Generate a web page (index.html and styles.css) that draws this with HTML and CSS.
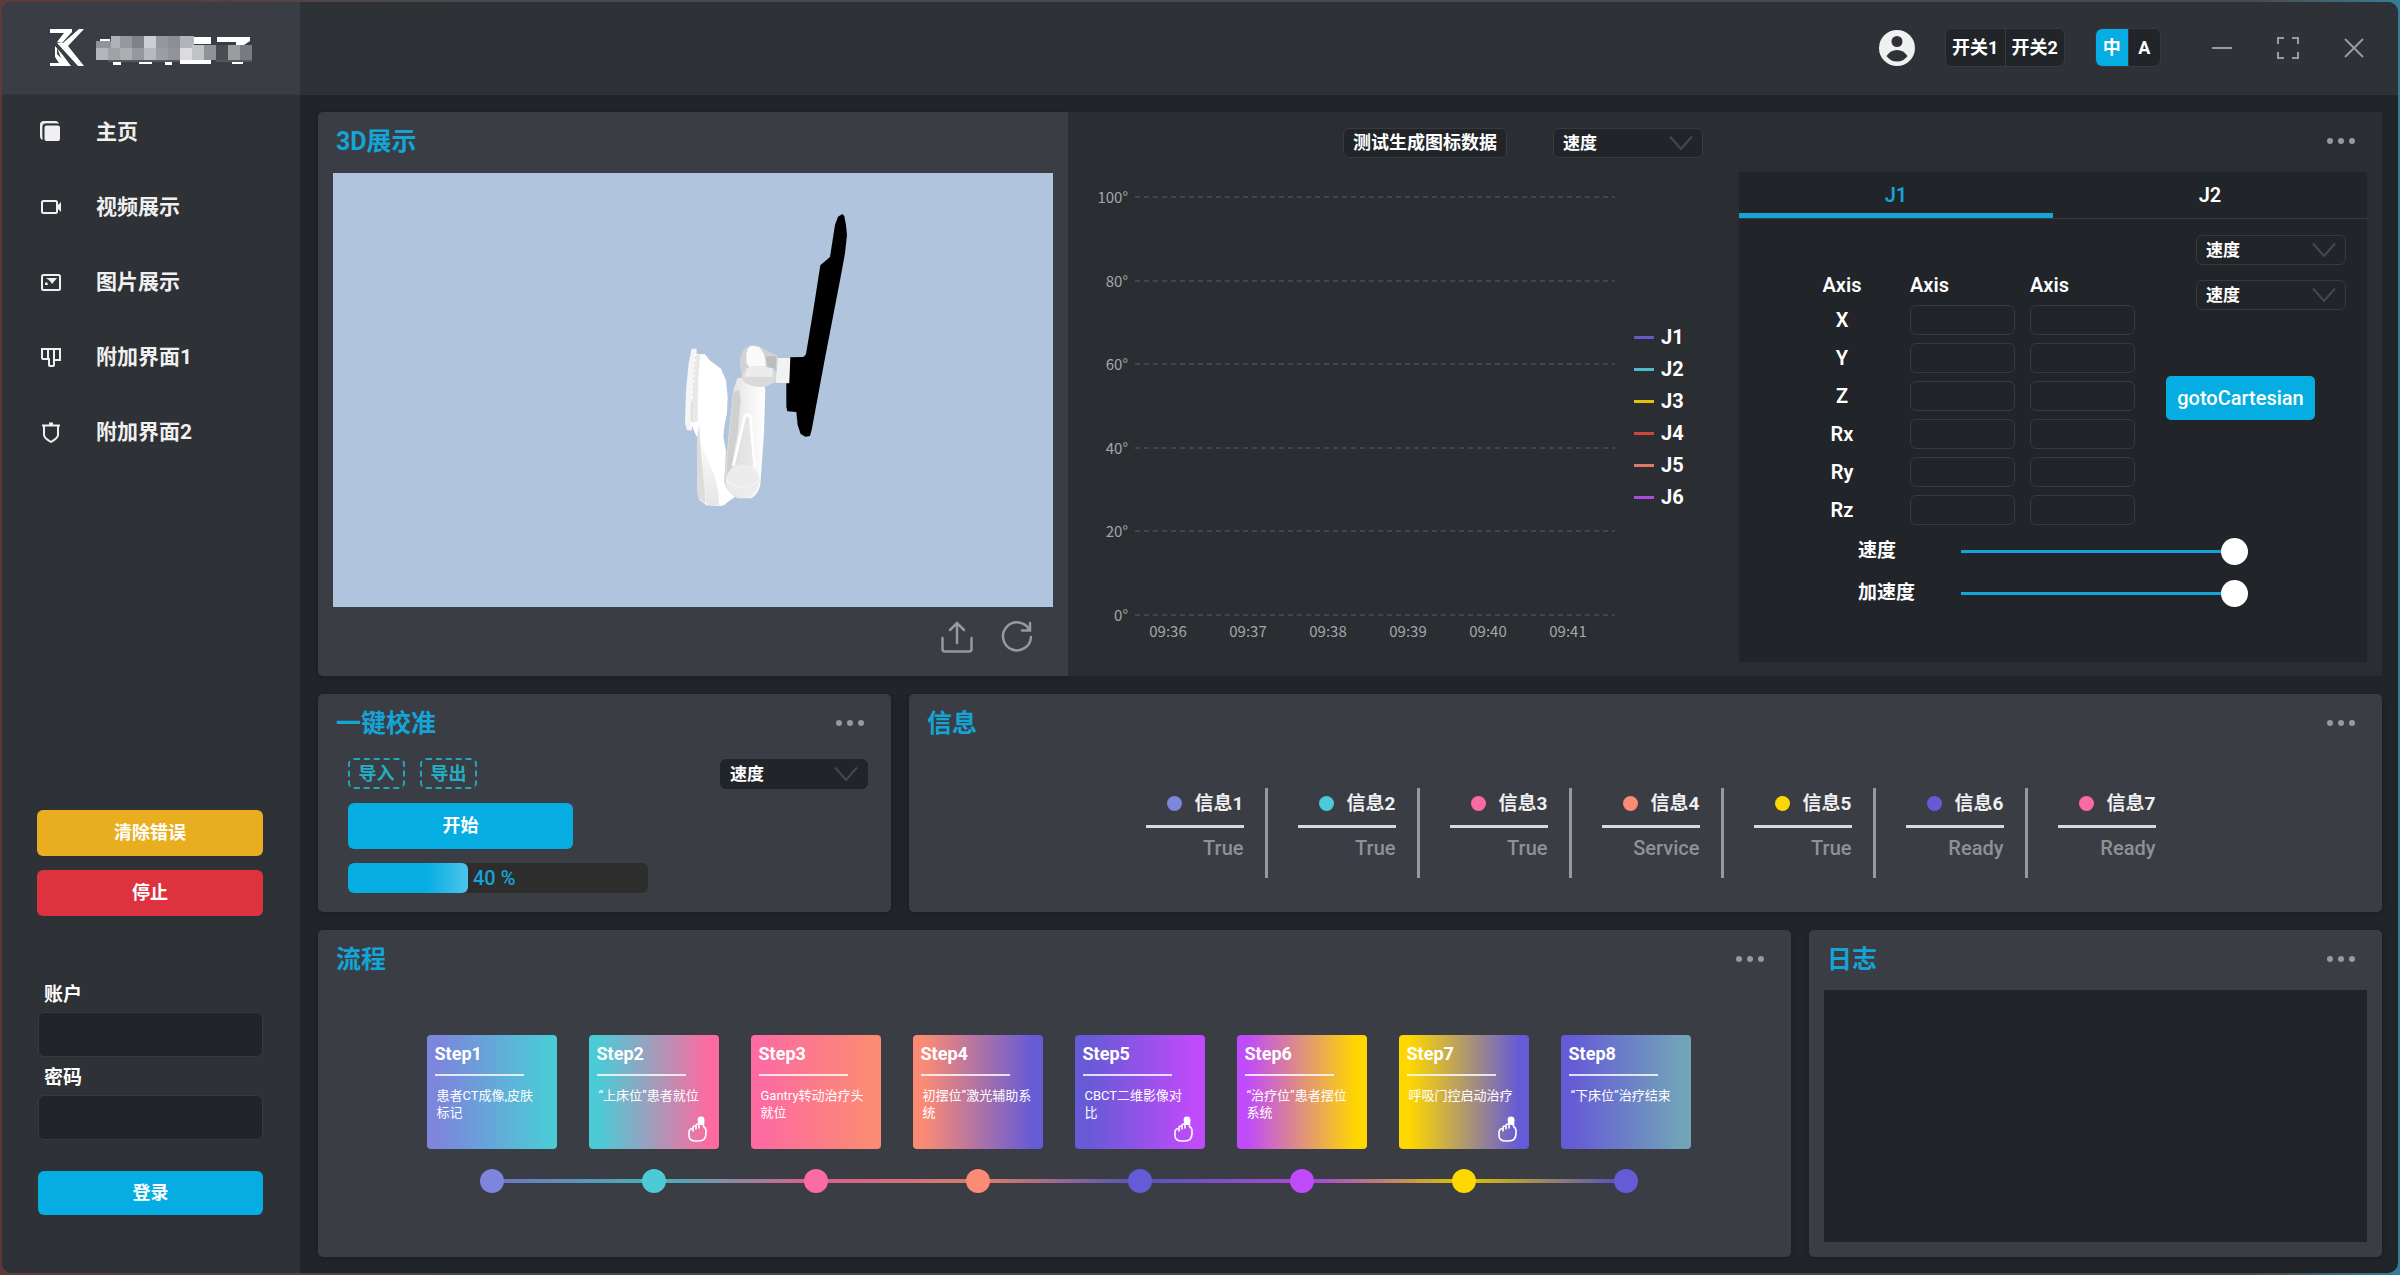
FILE: index.html
```html
<!DOCTYPE html>
<html lang="zh-CN">
<head>
<meta charset="utf-8">
<title>控制台</title>
<link rel="stylesheet" href="styles.css">
</head>
<body>
<svg class="defs" aria-hidden="true">
  <symbol id="chevron" viewBox="0 0 24 16"><path d="M1 1.500 12 14 23 1.500" fill="none" stroke="currentColor" stroke-width="2"/></symbol>
  <symbol id="hand" viewBox="0 0 20 26"><path d="M5 15V12.500q-4 0-4 4v3q0 5.500 7 5.500h2.500q7.500 0 7.500-7.500V14q-.5-2.500-2.500-3.500V4M5 15v-3.500q0-1.500 1.500-1.500T8 11.500V13M8 12V9.500Q8 8 9.500 8t1.500 1.500V12M11 11V4" fill="none" stroke="currentColor" stroke-width="1.600" stroke-linecap="round"/><circle cx="13" cy="4" r="3.400" fill="currentColor"/><path d="M11 4h4v5h-3z" fill="currentColor"/></symbol>
</svg>
<div class="app">
  <aside class="sidebar">
    <div class="brand">
      <svg width="206" height="40" viewBox="0 0 206 40" role="img" aria-label="logo">
        <g transform="translate(-46 -27)">
          <path fill="#fff" d="M50 29h22v3L62 43l-5-1 7-9H50zM79 29h5L68 46l16 20h-6L57 43h6zM50 66v-3h9l-4-6v-11l7 8 9 12zM57 48v6l4 4z"/>
          <path fill="#fff" d="M100 39h10v3h-10zM194 37h17v7h-17zM217 37h33v4l-6 4h-8v-3h-19zM113 61h8v4h-8zM139 61h13v3h-13zM165 61h7v4h-7zM180 60h31v4h-31zM232 61h11v3h-11z"/>
          <path fill="#929498" d="M96 41h15v7H96z"/><path fill="#b4b5ba" d="M96 48h12v12H96z"/><path fill="#a1a2a6" d="M108 48h12v12h-12z"/>
          <path fill="#b1b2b7" d="M111 36h9v12h-9z"/><path fill="#95999d" d="M120 36h12v12h-12z"/><path fill="#7f8388" d="M132 36h12v12h-12z"/><path fill="#cdced1" d="M144 36h12v12h-12z"/><path fill="#94979c" d="M156 36h12v12h-12z"/><path fill="#8b8f94" d="M168 36h12v12h-12z"/><path fill="#b2b4b8" d="M180 36h14v12h-14z"/>
          <path fill="#adaeb2" d="M120 48h12v12h-12z"/><path fill="#95999e" d="M132 48h12v12h-12z"/><path fill="#b8b9bf" d="M144 48h12v12h-12z"/><path fill="#9d9ea3" d="M156 48h12v12h-12z"/><path fill="#909499" d="M168 48h12v12h-12z"/><path fill="#dcdce0" d="M180 48h12v12h-12z"/><path fill="#c1c2c4" d="M192 45h12v15h-12z"/><path fill="#8f9298" d="M204 45h12v15h-12z"/><path fill="#484d52" d="M216 45h12v15h-12z"/><path fill="#9a9ca0" d="M228 45h12v15h-12z"/><path fill="#777a80" d="M240 45h12v15h-12z"/>
          <path fill="#53565b" d="M108 60h72v2h-72zM216 60h36v2h-36z"/>
        </g>
      </svg>
    </div>
    <nav class="menu">
      <a href="#home"><svg viewBox="0 0 22 22"><rect x="1" y="1" width="17" height="17" rx="3" fill="#bbb"/><rect x="3.500" y="3.500" width="17.500" height="17.500" rx="3" fill="#f0f0f0" stroke="#2e3135"/></svg>主页</a>
      <a href="#video"><svg viewBox="0 0 22 22"><rect x="2" y="5" width="15" height="12" rx="1.500"/><path d="M17 10l4-4v10l-4-4z" fill="currentColor" stroke="none"/></svg>视频展示</a>
      <a href="#image"><svg viewBox="0 0 22 22"><rect x="2" y="4" width="18" height="15" rx="1.500"/><path d="M6 7h11l-5 6-2-3z M5 12l2-1 1 3H5z" fill="currentColor" stroke="none"/></svg>图片展示</a>
      <a href="#extra1"><svg viewBox="0 0 22 22"><path d="M2 3h18v11h-6v5q0 1-1 1h-3q-1 0-1-1v-6H3q-1 0-1-1zM8 3v10M14 3v11"/></svg>附加界面1</a>
      <a href="#extra2"><svg viewBox="0 0 22 22"><path d="M2 4.500h18M4 5v9q0 3 7 7 7-4 7-7V5M9 2.500h4"/></svg>附加界面2</a>
    </nav>
    <div class="side-actions">
      <button class="btn amber">清除错误</button>
      <button class="btn red">停止</button>
    </div>
    <form class="login">
      <label for="account">账户</label>
      <input id="account" type="text">
      <label for="password">密码</label>
      <input id="password" type="password">
      <button class="btn blue" type="button">登录</button>
    </form>
  </aside>

  <div class="main">
    <header class="topbar">
      <svg class="avatar" viewBox="0 0 36 36"><circle cx="18" cy="18" r="18" fill="#f0f0f0"/><circle cx="18" cy="11.500" r="5.500" fill="#2e3135"/><path d="M7.500 26q4-6 10.500-6t10.500 6q-4 5.500-10.500 5.500T7.500 26z" fill="#2e3135"/></svg>
      <div class="segment switches"><button>开关1</button><button>开关2</button></div>
      <div class="segment lang"><button class="on">中</button><button>A</button></div>
      <div class="window-buttons">
        <button aria-label="最小化"><svg viewBox="0 0 24 24"><path d="M2 12h20"/></svg></button>
        <button aria-label="全屏"><svg viewBox="0 0 24 24"><path d="M2 8V2h6M16 2h6v6M22 16v6h-6M8 22H2v-6"/></svg></button>
        <button aria-label="关闭"><svg viewBox="0 0 24 24"><path d="M3 3l18 18M21 3 3 21"/></svg></button>
      </div>
    </header>

    <main class="content">
      <section class="row row-top">
        <div class="panel scene-panel">
          <h2>3D展示</h2>
          <svg class="scene" viewBox="0 0 720 434" role="img" aria-label="机械臂">
            <defs>
              <linearGradient id="arm"><stop offset="0" stop-color="#d9d9d9"/><stop offset=".5" stop-color="#efefef"/><stop offset="1" stop-color="#fff"/></linearGradient>
              <linearGradient id="base" y1="0" y2="1" x2="0"><stop offset="0" stop-color="#fff"/><stop offset="1" stop-color="#e6e6e6"/></linearGradient>
            </defs>
            <rect width="720" height="434" fill="#b0c4de"/>
            <g transform="translate(327 27) scale(.3333)">
              <path fill="#f5f5f5" d="M95 446h15v18l-8 30-5 180-2 18-14-2-6-20 3-100 8-80z"/>
              <path fill="#fff" d="M105 462l30 1 14 18 34 25 15 35 5 50-2 48-8 40-3 30 8 45-8 160-6 4-45-2-22-18-4-20V715l-8-15-12-30 5-120z"/>
              <path fill="#e9e9e9" d="M108 464h13l-6 70-2 130-16 6 2-90z"/>
              <path fill="none" stroke="#d0d6e0" stroke-width="3" stroke-dasharray="8 8" d="M107 470q-8 60-8 150"/>
              <path fill="#dcdcdc" d="M98 605v60l-6-2 1-60zM111 712l6-36 10 90 10 145-22-18-4-20z"/>
              <path fill="url(#base)" d="M118 690q10 60 38 120 20 40 22 106l-38-2q-12-80-22-224z"/>
              <path fill="#fff" d="M186 852l16-3 26 40-26 18-10 9h-8z"/>
              <path fill="url(#arm)" d="M220 570l12-36h76l8 35-4 130-11 155q-7 30-27 41h-42q-35-20-40-55l10-100z"/>
              <path fill="#d0d0d0" d="M221 575l17-5 4 30-8 90-20 115-14 22 5-90z"/>
              <path fill="#fff" d="M216 796l35-150q12-14 24 0l12 155h-7l-12-148q-5-7-10 0l-34 145z"/>
              <path fill="#ddd" d="M225 795l33-142q5-5 8 0l14 145z" opacity=".6"/>
              <ellipse cx="248" cy="842" rx="50" ry="49" fill="#ececec"/>
              <path fill="#d2d2d2" d="M240 490q0-46 35-54 14-3 24 4l54 27-4 40-70 30-28-10q-12-14-11-37z"/>
              <path fill="#fafafa" d="M260 490q-5-50 15-53l22 4q22 20 20 64l-40 9z"/>
              <ellipse cx="298" cy="529" rx="54" ry="32" fill="#dadada"/><path fill="#ececec" d="M260 505q40-15 78 0v25h-84z"/>
              <path fill="#bdbdbd" d="M318 470l30-2v38l-26-4z"/>
              <path fill="#f2f2f2" d="M353 474h40v20l-6 56-40-2z"/>
              <path fill="none" stroke="#fff" stroke-width="3" stroke-dasharray="4 5" d="M200 840q45 40 94 5"/>
              <path d="M534 50L547 42 553 48 558 75 561 105 555 160 545 215 520 345 494 480 455 690 450 708 436 710 422 702 413 675 409 636 382 634 379 620 379 550 388 550 391 472 430 471 438 463 460 330 481 196 510 171 525 75z"/>
            </g>
          </svg>
          <div class="scene-tools">
            <button aria-label="导出"><svg viewBox="0 0 32 32"><path d="M1.500 17v11q0 2.500 2.500 2.500h24q2.500 0 2.500-2.500V17M16 22V2M9 9l7-7 7 7"/></svg></button>
            <button aria-label="刷新"><svg viewBox="0 0 32 32"><path d="M28.500 9A14 14 0 1 0 30 16M29 2v7.500h-8"/></svg></button>
          </div>
        </div>

        <div class="panel-dark">
          <div class="chart">
            <div class="chart-toolbar">
              <button class="dark-button">测试生成图标数据</button>
              <div class="select"><select aria-label="图表数据"><option>速度</option></select><svg><use href="#chevron"/></svg></div>
            </div>
            <div class="chart-body">
              <div class="plot">
                <ul class="y-axis"><li><span>100°</span></li><li><span>80°</span></li><li><span>60°</span></li><li><span>40°</span></li><li><span>20°</span></li><li><span>0°</span></li></ul>
                <ul class="x-axis"><li>09:36</li><li>09:37</li><li>09:38</li><li>09:39</li><li>09:40</li><li>09:41</li></ul>
              </div>
              <ul class="legend"><li class="j1">J1</li><li class="j2">J2</li><li class="j3">J3</li><li class="j4">J4</li><li class="j5">J5</li><li class="j6">J6</li></ul>
            </div>
          </div>
          <div class="control">
            <div class="control-head"><button class="more" aria-label="更多"><i></i><i></i><i></i></button></div>
            <div class="control-box">
              <div class="tabs" role="tablist"><button role="tab" aria-selected="true" class="on">J1</button><button role="tab" aria-selected="false">J2</button></div>
              <div class="control-body">
                <table class="axis">
                  <thead><tr><th>Axis</th><th>Axis</th><th>Axis</th></tr></thead>
                  <tbody>
                    <tr><th>X</th><td><input aria-label="X 1"></td><td><input aria-label="X 2"></td></tr>
                    <tr><th>Y</th><td><input aria-label="Y 1"></td><td><input aria-label="Y 2"></td></tr>
                    <tr><th>Z</th><td><input aria-label="Z 1"></td><td><input aria-label="Z 2"></td></tr>
                    <tr><th>Rx</th><td><input aria-label="Rx 1"></td><td><input aria-label="Rx 2"></td></tr>
                    <tr><th>Ry</th><td><input aria-label="Ry 1"></td><td><input aria-label="Ry 2"></td></tr>
                    <tr><th>Rz</th><td><input aria-label="Rz 1"></td><td><input aria-label="Rz 2"></td></tr>
                  </tbody>
                </table>
                <div class="control-side">
                  <div class="select"><select aria-label="模式一"><option>速度</option></select><svg><use href="#chevron"/></svg></div>
                  <div class="select"><select aria-label="模式二"><option>速度</option></select><svg><use href="#chevron"/></svg></div>
                  <button class="goto">gotoCartesian</button>
                </div>
              </div>
              <div class="sliders">
                <label for="speed">速度</label><input id="speed" type="range" value="100">
                <label for="accel">加速度</label><input id="accel" type="range" value="100">
              </div>
            </div>
          </div>
        </div>
      </section>

      <section class="row row-mid">
        <div class="panel">
          <div class="panel-head"><h2>一键校准</h2><button class="more" aria-label="更多"><i></i><i></i><i></i></button></div>
          <div class="calib">
            <div class="calib-tools">
              <button class="dashed">导入</button><button class="dashed">导出</button>
              <div class="select"><select aria-label="校准模式"><option>速度</option></select><svg><use href="#chevron"/></svg></div>
            </div>
            <button class="btn blue start">开始</button>
            <div class="progress" role="progressbar" aria-valuenow="40"><div class="bar" style="width:40%"></div><span>40 %</span></div>
          </div>
        </div>
        <div class="panel">
          <div class="panel-head"><h2>信息</h2><button class="more" aria-label="更多"><i></i><i></i><i></i></button></div>
          <ul class="info">
            <li><b class="c1">信息1</b><span>True</span></li>
            <li><b class="c2">信息2</b><span>True</span></li>
            <li><b class="c3">信息3</b><span>True</span></li>
            <li><b class="c4">信息4</b><span>Service</span></li>
            <li><b class="c7">信息5</b><span>True</span></li>
            <li><b class="c5">信息6</b><span>Ready</span></li>
            <li><b class="c3">信息7</b><span>Ready</span></li>
          </ul>
        </div>
      </section>

      <section class="row row-bottom">
        <div class="panel">
          <div class="panel-head"><h2>流程</h2><button class="more" aria-label="更多"><i></i><i></i><i></i></button></div>
          <ol class="steps">
            <li class="s1"><div class="card"><h3>Step1</h3><p>患者CT成像,皮肤<br>标记</p></div></li>
            <li class="s2"><div class="card"><h3>Step2</h3><p>“上床位”患者就位</p><svg><use href="#hand"/></svg></div></li>
            <li class="s3"><div class="card"><h3>Step3</h3><p>Gantry转动治疗头<br>就位</p></div></li>
            <li class="s4"><div class="card"><h3>Step4</h3><p>初摆位”激光辅助系<br>统</p></div></li>
            <li class="s5"><div class="card"><h3>Step5</h3><p>CBCT二维影像对<br>比</p><svg><use href="#hand"/></svg></div></li>
            <li class="s6"><div class="card"><h3>Step6</h3><p>“治疗位”患者摆位<br>系统</p></div></li>
            <li class="s7"><div class="card"><h3>Step7</h3><p>呼吸门控启动治疗</p><svg><use href="#hand"/></svg></div></li>
            <li class="s8"><div class="card"><h3>Step8</h3><p>“下床位”治疗结束</p></div></li>
          </ol>
        </div>
        <div class="panel log-panel">
          <div class="panel-head"><h2>日志</h2><button class="more" aria-label="更多"><i></i><i></i><i></i></button></div>
          <div class="log" role="log"></div>
        </div>
      </section>
    </main>
  </div>
</div>
</body>
</html>
```
FILE: styles.css
```css
:root {
  --bg: #212429;
  --bar: #2e3135;
  --panel: #3a3d44;
  --line: #3a3a3d;
  --accent: #05ade2;
  --title: #14a4d6;
  --muted: #97999b;
}
* { box-sizing: border-box; }
body {
  margin: 0;
  padding: 2px;
  min-height: 100vh;
  display: flex;
  background: linear-gradient(90deg, #5c3a3a, #4a4a4a 20%, #4a4a4a 94%, #357f98);
  color: #fff;
  font: 500 20px/24px Roboto, "Noto Sans CJK SC", sans-serif;
}
ul, ol { margin: 0; padding: 0; list-style: none; }
h2, h3, p { margin: 0; }
button, input, select { font: inherit; color: inherit; margin: 0; }
button { border: 0; padding: 0; background: none; cursor: pointer; }
.defs { position: absolute; width: 0; height: 0; }

.app {
  flex: 1;
  display: grid;
  grid-template-columns: 298px 1fr;
  border-radius: 10px;
  overflow: hidden;
  background: var(--bg);
}

/* sidebar */
.sidebar { display: flex; flex-direction: column; background: var(--bar); }
.brand {
  height: 93px;
  padding: 0 44px 2px;
  display: flex;
  align-items: center;
  background: var(--panel);
  border-bottom: 1px solid #35383d;
}
.brand svg { flex: none; }
.menu a {
  height: 75px;
  padding: 0 0 2px 38px;
  display: flex;
  align-items: center;
  gap: 34px;
  font-size: 21px;
  font-weight: 700;
  color: #f0f0f0;
  text-decoration: none;
}
.menu svg { width: 22px; height: 22px; fill: none; stroke: currentColor; stroke-width: 2; }
.side-actions { margin: auto 37px 0 35px; display: grid; gap: 14px; }
.btn { height: 46px; border-radius: 6px; font-size: 18px; font-weight: 700; }
.amber { background: #e9ae20; }
.red { background: #dc333f; }
.blue { background: var(--accent); }
.login { margin: 58px 37px 58px 36px; display: grid; font-size: 19px; font-weight: 700; }
.login label { padding: 8px 6px 4px; line-height: 26px; }
.login input { height: 45px; }
.login .btn { height: 44px; margin-top: 31px; }
input[type=text], input[type=password], .axis input {
  width: 100%;
  padding: 0 10px;
  border: 1px solid var(--line);
  border-radius: 6px;
  background: var(--bg);
}

/* top bar */
.main { display: flex; flex-direction: column; min-width: 0; }
.topbar {
  height: 93px;
  padding: 0 32px 2px 0;
  display: flex;
  align-items: center;
  justify-content: flex-end;
  background: var(--bar);
}
.avatar { width: 36px; height: 36px; margin-right: 30px; }
.segment {
  height: 39px;
  display: flex;
  border: 1px solid var(--line);
  border-radius: 7px;
  overflow: hidden;
  background: var(--bg);
  font-size: 18px;
  font-weight: 700;
}
.segment button { flex: 1; }
.segment button + button { border-left: 1px solid var(--line); }
.switches { width: 120px; margin-right: 30px; }
.lang { width: 66px; }
.segment .on { background: var(--accent); }
.window-buttons { display: flex; gap: 42px; margin-left: 49px; }
.window-buttons button { height: 24px; }
.window-buttons svg { width: 24px; height: 24px; fill: none; stroke: #999b9d; stroke-width: 2; }

/* content grid */
.content { flex: 1; padding: 17px 16px 16px 18px; display: flex; flex-direction: column; gap: 18px; }
.row { display: grid; gap: 18px; }
.row-top { grid-template-columns: 750fr 1314fr; gap: 0; }
.row-mid { grid-template-columns: 573fr 1473fr; }
.row-bottom { grid-template-columns: 1473fr 573fr; flex: 1; }
.panel { background: var(--panel); border-radius: 5px; box-shadow: 0 1px 4px #0004; }
h2 { font-size: 25px; line-height: 30px; font-weight: 700; color: var(--title); }
.panel-head { height: 60px; padding: 0 27px 0 18px; display: flex; align-items: center; justify-content: space-between; }
.more { display: flex; gap: 5px; margin-bottom: 2px; }
.more i { width: 6px; height: 6px; border-radius: 50%; background: var(--muted); }

.select {
  display: grid;
  align-items: center;
  width: 150px;
  height: 30px;
  border: 1px solid var(--line);
  border-radius: 6px;
  background: var(--bg);
  font-size: 17px;
  font-weight: 700;
}
.select select {
  grid-area: 1 / 1;
  width: 100%;
  height: 28px;
  padding: 0 9px;
  border: 0;
  background: none;
  appearance: none;
}
.select svg { grid-area: 1 / 1; justify-self: end; width: 24px; height: 16px; margin-right: 9px; color: #46484b; pointer-events: none; }

/* 3D view */
.scene-panel { padding: 0 15px; border-radius: 5px 0 0 5px; display: flex; flex-direction: column; }
.scene-panel h2 { padding: 15px 3px 16px; }
.scene { display: block; width: 100%; }
.scene-tools { padding: 14px 20px 23px 0; display: flex; justify-content: flex-end; gap: 28px; }
.scene-tools button { height: 32px; }
.scene-tools svg { width: 32px; height: 32px; fill: none; stroke: var(--muted); stroke-width: 2.500; stroke-linecap: round; }

/* chart */
.panel-dark { display: grid; grid-template-columns: 673fr 641fr; background: #2a2d31; }
.chart { display: flex; flex-direction: column; }
.chart-toolbar { height: 61px; padding-right: 36px; display: flex; align-items: center; justify-content: flex-end; gap: 46px; }
.dark-button {
  height: 30px;
  padding: 0 9px;
  border: 1px solid var(--line);
  border-radius: 6px;
  background: var(--bg);
  font-size: 18px;
  font-weight: 700;
}
.chart-body { margin-top: 16px; display: flex; align-items: center; }
.plot { flex: 1; font: 400 15px/16px "Noto Sans CJK SC", sans-serif; color: #a4a6a8; }
.y-axis { height: 434px; display: flex; flex-direction: column; justify-content: space-between; }
.y-axis li { display: flex; align-items: center; gap: 7px; }
.y-axis span { width: 60px; text-align: right; }
.y-axis li::after { content: ""; flex: 1; height: 2px; background: repeating-linear-gradient(90deg, #3c484a 0 5px, transparent 5px 9px); }
.x-axis { display: grid; grid-template-columns: repeat(6, 1fr); padding: 0 7px 0 60px; text-align: center; }
.legend { width: 124px; padding: 6px 0 0 19px; }
.legend li { display: flex; align-items: center; gap: 7px; line-height: 32px; font-weight: 700; }
.legend li::before { content: ""; width: 20px; height: 3px; background: var(--c); }
.j1 { --c: #655bc4; } .j2 { --c: #4cbdc8; } .j3 { --c: #e0c30c; }
.j4 { --c: #d1453c; } .j5 { --c: #dd7b68; } .j6 { --c: #a94bdc; }

/* axis control */
.control { padding: 0 15px 14px 0; display: flex; flex-direction: column; }
.control-head { height: 60px; padding-right: 12px; display: flex; align-items: center; justify-content: flex-end; }
.control-box { flex: 1; background: var(--bg); }
.tabs { height: 47px; display: grid; grid-template-columns: 1fr 1fr; border-bottom: 1px solid var(--line); }
.tabs button { font-weight: 600; }
.tabs .on { color: var(--title); box-shadow: inset 0 -5px 0 var(--title); }
.control-body { display: flex; }
.axis { margin: 50px 0 0 35px; border-spacing: 0; border-collapse: collapse; }
.axis th { width: 136px; height: 38px; padding: 0; font-weight: 600; }
.axis thead th { height: 32px; width: 120px; text-align: left; }
.axis thead th:first-child { width: 136px; text-align: center; }
.axis td { width: 120px; padding: 0 15px 0 0; }
.axis input { display: block; height: 30px; }
.control-side { flex: 1; padding: 16px 21px 0 16px; display: flex; flex-direction: column; align-items: flex-end; gap: 15px; }
.goto { align-self: flex-start; width: 149px; height: 44px; margin-top: 51px; border-radius: 5px; background: var(--accent); }
.sliders { padding: 1px 119px 0; display: grid; grid-template-columns: 103px 287px; grid-auto-rows: 42px; align-items: center; font-size: 19px; font-weight: 700; }
input[type=range] { width: 100%; height: 27px; appearance: none; background: linear-gradient(var(--title), var(--title)) center / 100% 3px no-repeat; }
input[type=range]::-webkit-slider-thumb { appearance: none; width: 27px; height: 27px; border-radius: 50%; background: #fff; }

/* calibration */
.calib { padding: 4px 23px 19px 30px; }
.calib-tools { display: flex; align-items: center; gap: 15px; }
.calib .select { margin-left: auto; width: 148px; border-color: var(--bg); }
.dashed { width: 57px; height: 31px; border: 2px dashed #23a5bd; border-radius: 6px; color: #23b0c6; font-size: 18px; font-weight: 700; }
.start { display: block; width: 225px; margin: 14px 0; }
.progress { width: 300px; height: 30px; display: flex; align-items: center; gap: 5px; border-radius: 6px; background: #2d2d2e; color: var(--title); }
.bar { height: 100%; border-radius: 6px; background: linear-gradient(90deg, var(--accent) 65%, #4cc5ec); }

/* info strip */
.info { padding: 34px 0 0 4px; display: flex; justify-content: center; }
.info li { height: 90px; width: 152px; padding-right: 21px; border-right: 3px solid var(--muted); color: #8f9194; display: grid; grid-template-columns: 98px; justify-content: end; align-content: start; text-align: right; }
.info li:last-child { border-color: transparent; }
.info b { height: 40px; display: flex; align-items: center; justify-content: flex-end; gap: 13px; padding-bottom: 6px; border-bottom: 3px solid #d8d8da; font-weight: 700; font-size: 19px; color: #f0f0f0; }
.info b::before { content: ""; width: 15px; height: 15px; border-radius: 50%; background: var(--c); }
.info span { padding-top: 8px; }
.c1 { --c: #7d85dc; } .c2 { --c: #4ccad6; } .c3 { --c: #fd6ba0; } .c4 { --c: #fb8b74; }
.c5 { --c: #655bd6; } .c7 { --c: #ffd700; }

/* process steps */
.steps { padding: 45px 0 0 8px; display: flex; justify-content: center; gap: 32px; }
.steps li { --fill: linear-gradient(90deg, var(--c) 8%, var(--d) 92%); position: relative; width: 130px; display: grid; justify-items: center; gap: 20px; }
.steps li::before { content: ""; order: 2; width: 24px; height: 24px; border-radius: 50%; background: var(--c); z-index: 1; }
.steps li:not(:last-child)::after { content: ""; position: absolute; left: 65px; bottom: 10px; width: 162px; height: 4px; background: var(--fill); opacity: .8; }
.card { position: relative; width: 130px; height: 114px; padding: 7px 8px; border-radius: 4px; background: var(--fill); white-space: nowrap; }
.card h3 { font-size: 18px; line-height: 24px; font-weight: 700; }
.card h3::after { content: ""; display: block; width: 89px; height: 2px; margin-top: 8px; background: #fffc; }
.card p { padding: 11px 2px 0; font-size: 13px; line-height: 17px; font-weight: 400; }
.card svg { position: absolute; right: 11px; bottom: 7px; width: 20px; height: 26px; }
.s1 { --c: #7d85dc; --d: #4ccad6; } .s2 { --c: #4ccad6; --d: #fd6ba0; }
.s3 { --c: #fd6ba0; --d: #fb8b74; } .s4 { --c: #fb8b74; --d: #655bd6; }
.s5 { --c: #655bd6; --d: #c04bfa; } .s6 { --c: #c04bfa; --d: #ffd700; }
.s7 { --c: #ffd700; --d: #655bd6; } .s8 { --c: #655bd6; --d: #72a3b9; }

/* log */
.log-panel { padding: 0 0 15px; display: flex; flex-direction: column; }
.log { flex: 1; margin: 0 15px; background: var(--bg); }
```
